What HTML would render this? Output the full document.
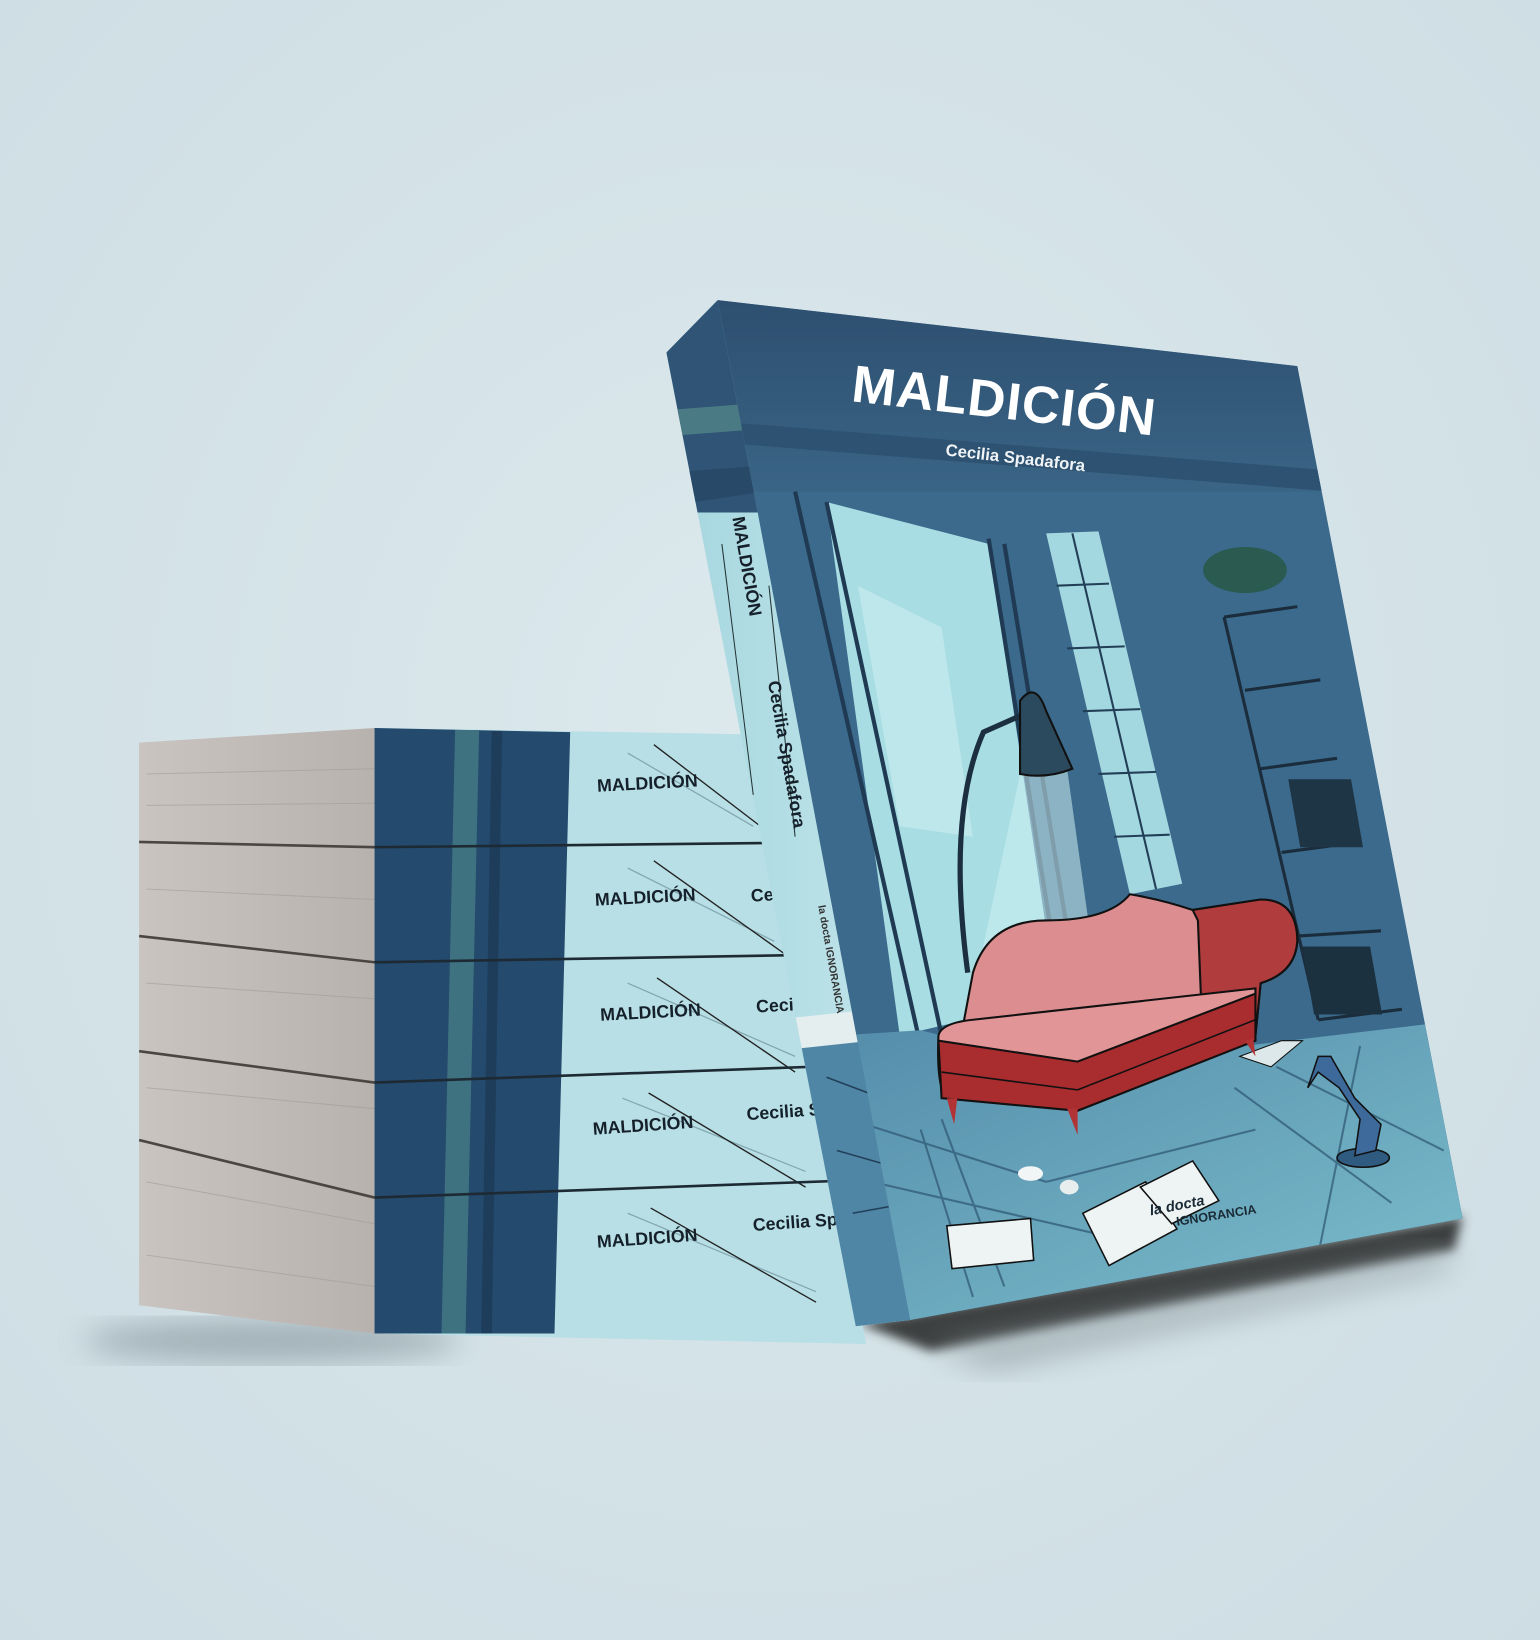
<!DOCTYPE html>
<html><head><meta charset="utf-8"><style>
html,body{margin:0;padding:0;background:#d3e3e8;}
svg{display:block}
text{font-family:"Liberation Sans",sans-serif;font-weight:bold}
</style></head><body>
<svg width="1540" height="1640" viewBox="0 0 1472 1568" preserveAspectRatio="none" xmlns="http://www.w3.org/2000/svg">
<defs>
<radialGradient id="bg" cx="0.5" cy="0.45" r="0.75">
<stop offset="0" stop-color="#dce9ed"/><stop offset="1" stop-color="#cddde3"/></radialGradient>
<linearGradient id="pages" x1="0" y1="0" x2="1" y2="0">
<stop offset="0" stop-color="#c9c4c0"/><stop offset="1" stop-color="#b8b2ae"/></linearGradient>
<linearGradient id="coverTop" x1="0" y1="0" x2="0" y2="1">
<stop offset="0" stop-color="#2c4d6e"/><stop offset="1" stop-color="#3a6485"/></linearGradient>
<linearGradient id="floor" x1="0" y1="0" x2="1" y2="1">
<stop offset="0" stop-color="#4f86a6"/><stop offset="1" stop-color="#7fc2cf"/></linearGradient>
<linearGradient id="spineL" x1="0" y1="0" x2="1" y2="0">
<stop offset="0" stop-color="#a6d6df"/><stop offset="1" stop-color="#c1e5ea"/></linearGradient>
<clipPath id="cov"><polygon points="686,287 1240,350 1398,1165 870,1262"/></clipPath>
<clipPath id="spn"><polygon points="637,337 686,287 870,1262 818,1268"/></clipPath>
<filter id="blur"><feGaussianBlur stdDeviation="14"/></filter>
<filter id="blur2"><feGaussianBlur stdDeviation="5"/></filter>
</defs>
<rect width="1472" height="1568" fill="url(#bg)"/>

<!-- shadows -->
<ellipse cx="260" cy="1282" rx="180" ry="20" fill="#6f7f86" opacity="0.5" filter="url(#blur)"/>
<polygon points="820,1265 1398,1163 1390,1195 890,1292" fill="#3d3f40" filter="url(#blur2)"/>
<polygon points="890,1290 1390,1195 1380,1215 950,1310" fill="#8a979c" opacity="0.6" filter="url(#blur)"/>

<!-- stack pages face -->
<polygon points="133,710 358,696 358,1275 133,1248" fill="url(#pages)"/>
<g stroke="#a29c98" stroke-width="1" opacity="0.6">
<line x1="140" y1="740" x2="358" y2="735"/><line x1="140" y1="770" x2="358" y2="768"/>
<line x1="140" y1="850" x2="358" y2="860"/><line x1="140" y1="940" x2="358" y2="955"/>
<line x1="140" y1="1040" x2="358" y2="1060"/><line x1="140" y1="1130" x2="358" y2="1170"/>
<line x1="140" y1="1200" x2="358" y2="1230"/>
</g>
<g stroke="#4a4644" stroke-width="2.5">
<line x1="133" y1="805" x2="358" y2="810"/><line x1="133" y1="895" x2="358" y2="920"/>
<line x1="133" y1="1005" x2="358" y2="1035"/><line x1="133" y1="1090" x2="358" y2="1145"/>
</g>

<!-- stack spines -->
<g>
<polygon points="358,696 712,702 828,1285 358,1275" fill="#b7dfe5"/>
<polygon points="358,696 545,700 530,1275 358,1275" fill="#244a6d"/>
<polygon points="435,698 458,698 445,1275 422,1275" fill="#3f7280"/>
<polygon points="470,699 480,699 470,1275 460,1275" fill="#1d3d5b"/>
<g stroke="#6f8f99" stroke-width="1.2" opacity="0.7">
<line x1="600" y1="720" x2="720" y2="790"/><line x1="600" y1="830" x2="740" y2="900"/>
<line x1="600" y1="940" x2="760" y2="1010"/><line x1="595" y1="1050" x2="770" y2="1120"/>
<line x1="600" y1="1160" x2="780" y2="1235"/>
</g>
<g stroke="#222" stroke-width="1.3">
<line x1="625" y1="712" x2="740" y2="800"/><line x1="625" y1="823" x2="750" y2="912"/>
<line x1="628" y1="935" x2="760" y2="1025"/><line x1="620" y1="1045" x2="770" y2="1135"/>
<line x1="622" y1="1155" x2="780" y2="1245"/>
</g>
<g stroke="#1e2a33" stroke-width="2.5">
<line x1="358" y1="810" x2="830" y2="805"/><line x1="358" y1="920" x2="830" y2="912"/>
<line x1="358" y1="1035" x2="830" y2="1018"/><line x1="358" y1="1145" x2="830" y2="1128"/>
</g>
<g fill="#15202a" font-size="17">
<text x="571" y="757" transform="rotate(-3 571 757)">MALDICIÓN</text>
<text x="569" y="866" transform="rotate(-3 569 866)">MALDICIÓN</text><text x="718" y="862" transform="rotate(-3 718 862)">Cecilia</text>
<text x="574" y="976" transform="rotate(-3 574 976)">MALDICIÓN</text><text x="723" y="968" transform="rotate(-3 723 968)">Cecilia</text>
<text x="567" y="1085" transform="rotate(-4 567 1085)">MALDICIÓN</text><text x="714" y="1071" transform="rotate(-4 714 1071)">Cecilia Spa</text>
<text x="571" y="1193" transform="rotate(-4 571 1193)">MALDICIÓN</text><text x="720" y="1177" transform="rotate(-4 720 1177)">Cecilia Spada</text>
</g>
</g>

<!-- standing book spine -->
<polygon points="637,337 686,287 870,1262 818,1268" fill="url(#spineL)"/>
<g clip-path="url(#spn)">
<rect x="600" y="280" width="300" height="210" fill="#2f5475"/>
<polygon points="600,395 730,385 730,410 600,420" fill="#4a7a84"/>
<polygon points="600,455 730,445 730,470 600,490" fill="#284a68"/>
<g stroke="#233" stroke-width="1"><line x1="690" y1="520" x2="720" y2="760"/><line x1="735" y1="560" x2="760" y2="800"/></g>
<polygon points="740,975 880,960 880,995 740,1010" fill="#e4eeee"/>
<polygon points="740,1005 880,990 880,1300 740,1300" fill="#4f86a6"/>
<g stroke="#22405a" stroke-width="1.5"><line x1="790" y1="1030" x2="870" y2="1060"/><line x1="800" y1="1100" x2="870" y2="1120"/><line x1="815" y1="1160" x2="870" y2="1150"/></g>
</g>
<text x="700" y="495" fill="#15202a" font-size="17" transform="rotate(80 700 495)">MALDICIÓN</text>
<text x="734" y="652" fill="#15202a" font-size="17" transform="rotate(80 734 652)">Cecilia Spadafora</text>
<text x="782" y="866" fill="#333" font-size="10" font-weight="normal" font-family="Liberation Serif" transform="rotate(80 782 866)">la docta IGNORANCIA</text>

<!-- cover -->
<polygon points="686,287 1240,350 1398,1165 870,1262" fill="#3d6a8c"/>
<g clip-path="url(#cov)">
<rect x="650" y="270" width="800" height="200" fill="url(#coverTop)"/>
<polygon points="650,400 1400,460 1400,480 650,420" fill="#2e5271"/>
<polygon points="650,470 1400,470 1400,1300 650,1300" fill="#3b6a8c"/>
<!-- big window -->
<polygon points="790,480 945,520 1010,955 860,990" fill="#a7dde3"/>
<polygon points="820,560 900,600 930,800 860,790" fill="#c4eaee" opacity="0.8"/>
<g stroke="#1f3a52" stroke-width="4" fill="none">
<line x1="760" y1="470" x2="880" y2="1000"/><line x1="790" y1="480" x2="900" y2="990"/>
<line x1="945" y1="515" x2="1015" y2="955"/><line x1="960" y1="520" x2="1030" y2="950"/>
</g>
<!-- tall window -->
<polygon points="1000,510 1050,508 1130,845 1080,855" fill="#a3d8e0"/>
<g stroke="#233f57" stroke-width="2">
<line x1="1010" y1="560" x2="1060" y2="558"/><line x1="1020" y1="620" x2="1075" y2="618"/>
<line x1="1035" y1="680" x2="1090" y2="678"/><line x1="1050" y1="740" x2="1105" y2="738"/>
<line x1="1065" y1="800" x2="1118" y2="798"/><line x1="1025" y1="510" x2="1105" y2="850"/>
</g>
<!-- light cone -->
<polygon points="975,740 1020,735 1050,950 930,950" fill="#cdeff3" opacity="0.55"/>
<!-- lamp -->
<path d="M925,930 Q905,780 940,700 L985,680" stroke="#1c2f40" stroke-width="5" fill="none"/>
<path d="M975,670 Q990,650 1000,680 L1025,735 Q1000,745 975,740 Z" fill="#2c4a5e" stroke="#111" stroke-width="2"/>
<!-- shelves right -->
<g stroke="#1b2d3d" stroke-width="3">
<line x1="1170" y1="590" x2="1240" y2="580"/><line x1="1190" y1="660" x2="1262" y2="650"/>
<line x1="1205" y1="735" x2="1278" y2="725"/><line x1="1225" y1="815" x2="1300" y2="805"/>
<line x1="1240" y1="895" x2="1320" y2="890"/><line x1="1260" y1="975" x2="1340" y2="965"/>
<line x1="1170" y1="590" x2="1260" y2="975"/>
</g>
<rect x="1195" y="600" width="50" height="55" fill="#1e3546" transform="skewX(10)"/>
<rect x="1100" y="745" width="60" height="65" fill="#1e3546" transform="skewX(10)"/>
<rect x="1085" y="905" width="65" height="65" fill="#1c3140" transform="skewX(10)"/>
<ellipse cx="1190" cy="545" rx="40" ry="22" fill="#2a5a50"/>
<!-- floor -->
<polygon points="650,1000 880,985 1020,1020 1400,975 1400,1300 650,1300" fill="url(#floor)"/>
<g stroke="#2e5671" stroke-width="2" opacity="0.7">
<line x1="780" y1="1060" x2="1000" y2="1130"/><line x1="790" y1="1120" x2="1050" y2="1180"/>
<line x1="1180" y1="1040" x2="1330" y2="1150"/><line x1="1220" y1="1020" x2="1380" y2="1100"/>
<line x1="1000" y1="1130" x2="1200" y2="1080"/><line x1="1300" y1="1000" x2="1260" y2="1200"/>
<line x1="880" y1="1080" x2="930" y2="1240"/><line x1="900" y1="1070" x2="960" y2="1230"/>
</g>
<!-- papers -->
<polygon points="905,1172 985,1165 988,1205 910,1213" fill="#eef4f4" stroke="#111" stroke-width="1.5"/>
<polygon points="1035,1160 1095,1130 1125,1175 1060,1210" fill="#eef4f4" stroke="#111" stroke-width="1.5"/>
<polygon points="1090,1135 1140,1110 1165,1148 1120,1170" fill="#eef4f4" stroke="#111" stroke-width="1.5"/>
<polygon points="1185,1010 1225,995 1245,995 1215,1020" fill="#dde8ea" stroke="#111" stroke-width="1"/>
<ellipse cx="985" cy="1122" rx="12" ry="7" fill="#f2f5f5"/><ellipse cx="1022" cy="1135" rx="9" ry="7" fill="#e8eeee"/>
<!-- horse -->
<ellipse cx="1303" cy="1107" rx="25" ry="9" fill="#2f5b80" stroke="#111" stroke-width="1.5"/>
<path d="M1295,1105 L1300,1070 L1280,1040 L1260,1025 L1250,1040 L1260,1010 L1272,1010 L1295,1050 L1320,1075 L1315,1100 Z" fill="#3d6a9a" stroke="#111" stroke-width="1.5"/>
<!-- sofa -->
<path d="M930,930 Q945,880 1000,880 Q1060,880 1080,855 Q1110,860 1140,870 L1205,860 Q1240,860 1240,900 Q1238,930 1205,940 L1200,990 L1030,1045 L915,1010 Z" fill="#dc8d8f" stroke="#111" stroke-width="2"/>
<path d="M1140,870 L1205,860 Q1240,860 1240,900 Q1238,930 1205,940 L1200,990 L1150,1005 L1145,880 Z" fill="#b13c3d" stroke="#111" stroke-width="2"/>
<path d="M897,990 Q900,978 930,975 L1200,945 L1200,995 L1025,1060 L905,1050 Q895,1040 897,990 Z" fill="#e29596" stroke="#111" stroke-width="2"/>
<path d="M897,995 L1030,1015 L1200,950 L1200,995 L1030,1062 L900,1050 Z" fill="#a92c2f" stroke="#111" stroke-width="2"/>
<line x1="900" y1="1025" x2="1030" y2="1042" stroke="#111" stroke-width="1.5"/>
<line x1="1030" y1="1042" x2="1200" y2="975" stroke="#111" stroke-width="1.5"/>
<polygon points="905,1050 915,1050 912,1075" fill="#b23335"/>
<polygon points="1020,1060 1030,1060 1030,1085" fill="#b23335"/>
<polygon points="1190,995 1198,993 1200,1010" fill="#b23335"/>
</g>
<!-- cover title -->
<text x="958" y="400" text-anchor="middle" fill="#ffffff" font-size="50" transform="rotate(6.5 958 400)" letter-spacing="1">MALDICIÓN</text>
<text x="970" y="443" text-anchor="middle" fill="#f0f4f6" font-size="16" transform="rotate(6.5 970 443)">Cecilia Spadafora</text>
<text x="1100" y="1162" fill="#1a2a35" font-size="14" font-weight="normal" font-family="Liberation Serif" font-style="italic" transform="rotate(-11 1100 1162)">la docta</text>
<text x="1125" y="1172" fill="#1a2a35" font-size="12" font-weight="normal" font-family="Liberation Serif" transform="rotate(-9 1125 1172)">IGNORANCIA</text>
</svg>
</body></html>
